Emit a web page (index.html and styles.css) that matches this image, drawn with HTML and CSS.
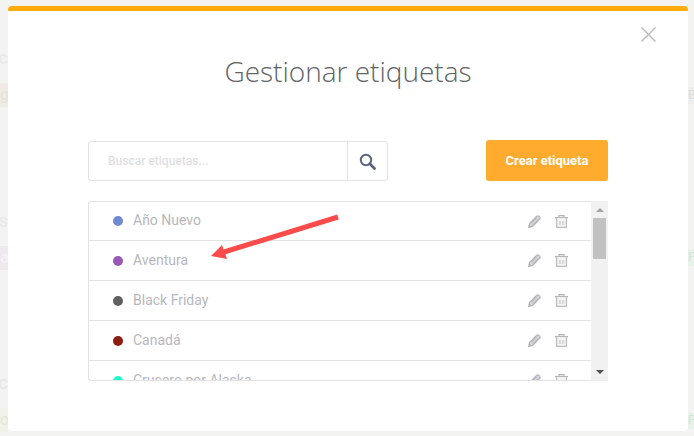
FILE: index.html
```html
<!DOCTYPE html>
<html lang="es">
<head>
    <meta charset="UTF-8">
    <title>Gestionar etiquetas</title>
    <link rel="stylesheet" href="styles.css">
</head>
<body>

    <!-- page behind the overlay, only the edges show -->
    <div class="backdrop">
        <div class="back-group">
            <div class="back-line"><span class="back-text">uc</span></div>
            <div class="back-row"><span class="back-band band-beige">g</span><span class="back-pill pill-gray">BC</span></div>
        </div>
        <div class="back-group">
            <div class="back-line"><span class="back-text">is</span></div>
            <div class="back-row"><span class="back-band band-purple">a</span><span class="back-pill pill-green">PU</span></div>
        </div>
        <div class="back-group">
            <div class="back-line"><span class="back-text">uc</span></div>
            <div class="back-row"><span class="back-band band-green">on</span><span class="back-pill pill-green">PU</span></div>
        </div>
    </div>

    <div class="modal">
        <button class="close" aria-label="Cerrar">
            <svg width="15" height="15" viewBox="0 0 15 15"><path d="M.5.5l14 14M14.5.5l-14 14" stroke="#bdbdbd" stroke-width="1.5" fill="none"/></svg>
        </button>

        <h1 class="title">Gestionar etiquetas</h1>

        <div class="toolbar">
            <div class="search">
                <span class="search-input">Buscar etiquetas...</span>
                <span class="search-btn">
                    <svg width="17" height="17" viewBox="0 0 17 17"><circle cx="7" cy="7" r="5.2" stroke="#5c6580" stroke-width="2" fill="none"/><path d="M10.8 10.8l4.7 4.7" stroke="#5c6580" stroke-width="2.8" stroke-linecap="round"/></svg>
                </span>
            </div>
            <button class="create">Crear etiqueta</button>
        </div>

        <div class="list-box">
            <ul class="tags">
                <li class="tag"><i class="dot" style="background:#7189d0"></i><span class="tag-name">Año Nuevo</span>
                    <svg class="ico-edit" viewBox="0 0 13 13"><use href="#pencil"/></svg><svg class="ico-del" viewBox="0 0 13 13"><use href="#trash"/></svg></li>
                <li class="tag"><i class="dot" style="background:#9b59b6"></i><span class="tag-name">Aventura</span>
                    <svg class="ico-edit" viewBox="0 0 13 13"><use href="#pencil"/></svg><svg class="ico-del" viewBox="0 0 13 13"><use href="#trash"/></svg></li>
                <li class="tag"><i class="dot" style="background:#606060"></i><span class="tag-name">Black Friday</span>
                    <svg class="ico-edit" viewBox="0 0 13 13"><use href="#pencil"/></svg><svg class="ico-del" viewBox="0 0 13 13"><use href="#trash"/></svg></li>
                <li class="tag"><i class="dot" style="background:#8e1c10"></i><span class="tag-name">Canadá</span>
                    <svg class="ico-edit" viewBox="0 0 13 13"><use href="#pencil"/></svg><svg class="ico-del" viewBox="0 0 13 13"><use href="#trash"/></svg></li>
                <li class="tag"><i class="dot" style="background:#1fffc8"></i><span class="tag-name">Crucero por Alaska</span>
                    <svg class="ico-edit" viewBox="0 0 13 13"><use href="#pencil"/></svg><svg class="ico-del" viewBox="0 0 13 13"><use href="#trash"/></svg></li>
            </ul>
            <div class="scrollbar">
                <span class="arrow-up"></span>
                <div class="track"><div class="thumb"></div></div>
                <span class="arrow-down"></span>
            </div>
        </div>
    </div>

    <!-- annotation drawn on top of the screenshot -->
    <svg class="annotation" width="140" height="50" viewBox="0 0 140 50">
        <path d="M129 3L15 38" stroke="#fb4b4b" stroke-width="5" fill="none"/>
        <path d="M2 42L13 31L18 45Z" fill="#fb4b4b"/>
    </svg>

    <svg width="0" height="0" class="defs">
        <symbol id="pencil" viewBox="0 0 13 13">
            <path d="M.7 12.3l1-3.9 6.9-6.9c.8-.8 1.8-.8 2.5-.1l.5.5c.7.7.7 1.7-.1 2.5l-6.9 6.9z" fill="#d8d8dc" stroke="#b6b6bc" stroke-width="1.3"/>
            <path d="M3.2 8l5.4-5.4M5 9.8l5.4-5.4" stroke="#b6b6bc" stroke-width="1.1"/>
            <path d="M.3 12.7l.9-3.4 2.5 2.5z" fill="#b6b6bc"/>
        </symbol>
        <symbol id="trash" viewBox="0 0 13 13">
            <path d="M0 2.6h13" stroke="#b4b4ba" stroke-width="1.4"/>
            <path d="M4 2V.6h5V2" stroke="#b4b4ba" stroke-width="1.2" fill="none"/>
            <path d="M1.6 3.2v9.2h9.8V3.2" stroke="#bcbcc2" stroke-width="1.3" fill="#f4f4f5"/>
            <path d="M5 6v4M8 6v4" stroke="#bcbcc2" stroke-width="1"/>
        </symbol>
    </svg>

</body>
</html>
```

FILE: styles.css
```css
* {
    box-sizing: border-box;
}
body {
    margin: 0;
    position: relative;
    overflow: hidden;
    width: 694px;
    height: 436px;
    font-family: Roboto, "Liberation Sans", sans-serif;
    background-color: #f3f3f1;
}

/* faded page behind the modal */
.backdrop {
    height: 436px;
    overflow: hidden;
    padding-top: 46px;
}
.back-group {
    height: 162.5px;
}
.back-group:last-child {
    height: 65px;
}
.back-line {
    height: 24px;
    margin-bottom: 13px;
    line-height: 24px;
    white-space: nowrap;
}
.back-row {
    display: flex;
    justify-content: space-between;
    align-items: center;
    height: 24px;
}
.back-text {
    display: block;
    width: 8px;
    overflow: hidden;
    direction: rtl;
    color: #e8e8e6;
    font-size: 18px;
}
.back-band {
    width: 8px;
    height: 24px;
    overflow: hidden;
    font-size: 16px;
    line-height: 24px;
    white-space: nowrap;
}
.band-beige {
    background-color: #f0ebe5;
    color: #e6e2dc;
}
.band-purple {
    background-color: #eee8ef;
    color: #f6f2f6;
}
.band-green {
    background-color: #edf3e6;
    color: #e2ead9;
}
.back-pill {
    width: 6px;
    height: 17px;
    font-size: 12px;
    line-height: 17px;
    overflow: hidden;
    white-space: nowrap;
}
.pill-gray {
    background-color: #eeeeec;
    color: #dddddd;
}
.pill-green {
    background-color: #e8f2ea;
    color: #d4e4d8;
}

.modal {
    position: absolute;
    left: 8px;
    top: 6px;
    width: 680px;
    height: 425px;
    padding: 0 80px;
    background-color: #ffffff;
    border-top: 5px solid #ffab0a;
    border-radius: 4px;
}
.close {
    position: absolute;
    top: 16px;
    right: 32px;
    width: 15px;
    height: 15px;
    padding: 0;
    border: none;
    background: none;
    line-height: 0;
}
.title {
    margin: 0;
    padding-top: 40px;
    height: 129px;
    text-align: center;
    font-family: "Open Sans", sans-serif;
    font-size: 28px;
    font-weight: 300;
    line-height: 40px;
    color: #606368;
}

.toolbar {
    display: flex;
    justify-content: space-between;
    align-items: flex-end;
    height: 41px;
}
.search {
    display: flex;
    width: 300px;
    height: 40px;
    border: 1px solid #e3e3e6;
    border-radius: 3px;
}
.search-input {
    flex: 1;
    padding-left: 19px;
    font-size: 12px;
    font-weight: 500;
    line-height: 38px;
    color: #dfdfe2;
}
.search-btn {
    width: 40px;
    border-left: 1px solid #e3e3e6;
    display: flex;
    align-items: center;
    justify-content: center;
}
.create {
    width: 122px;
    height: 41px;
    border: none;
    border-radius: 3px;
    background-color: #ffab2e;
    color: #ffffff;
    font-family: inherit;
    font-size: 13px;
    font-weight: 700;
}

.list-box {
    display: flex;
    height: 180px;
    margin-top: 20px;
}
.tags {
    flex: 1;
    margin: 0;
    padding: 0;
    list-style: none;
    overflow: hidden;
    border: 1px solid #e3e3e6;
    border-right: none;
    border-radius: 3px 0 0 3px;
}
.tag {
    display: flex;
    align-items: center;
    height: 40px;
    padding-left: 24px;
    border-bottom: 1px solid #e3e3e6;
}
.tag:first-child {
    height: 39px;
}
.dot {
    width: 10px;
    height: 10px;
    border-radius: 50%;
    margin-right: 10px;
}
.tag-name {
    flex: 1;
    padding-bottom: 2px;
    font-size: 14px;
    color: #b7b7bd;
}
.ico-edit {
    width: 13px;
    height: 13px;
    margin-right: 14px;
}
.ico-del {
    width: 13px;
    height: 13px;
    margin-right: 23px;
}

.scrollbar {
    width: 17px;
    background-color: #f1f1f1;
    display: flex;
    flex-direction: column;
    align-items: center;
}
.arrow-up, .arrow-down {
    flex: none;
    width: 0;
    height: 0;
    border-left: 4px solid transparent;
    border-right: 4px solid transparent;
}
.arrow-up {
    margin-top: 7px;
    border-bottom: 4px solid #a3a3a3;
}
.arrow-down {
    margin-bottom: 7px;
    border-top: 4px solid #505050;
}
.track {
    flex: 1;
    width: 100%;
    padding: 6px 2px 0;
}
.thumb {
    height: 41px;
    background-color: #c1c1c1;
}

.annotation {
    position: absolute;
    left: 209px;
    top: 214px;
}
.defs {
    position: absolute;
}
```
